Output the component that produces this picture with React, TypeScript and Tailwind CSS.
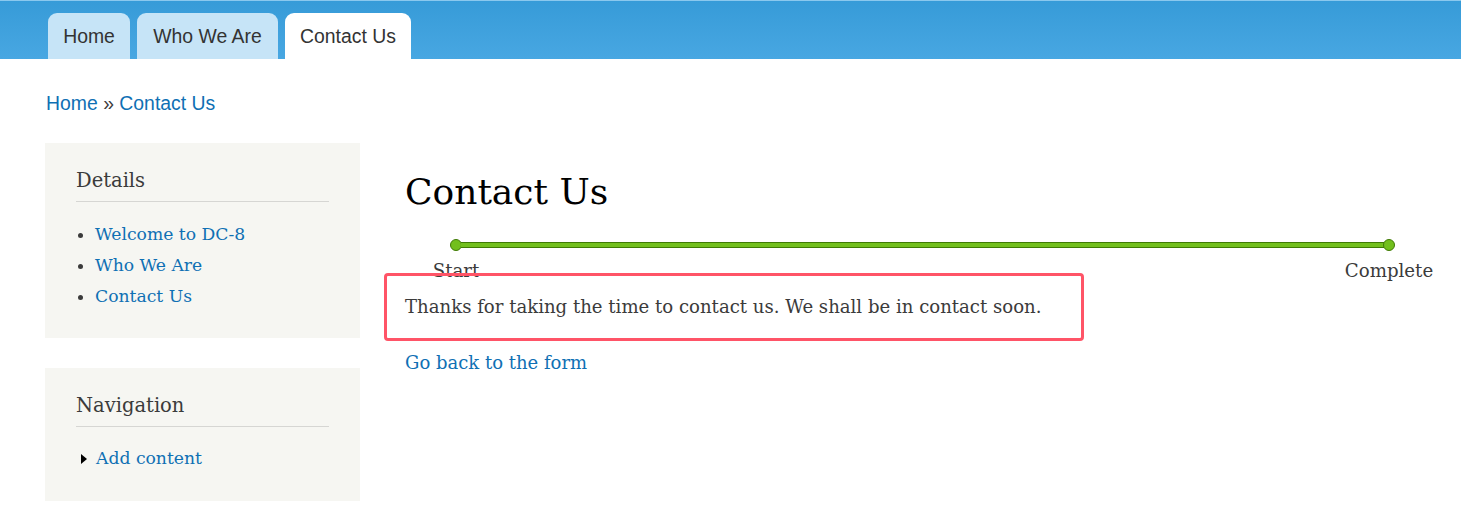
import React from 'react';

const serif = "font-['DejaVu_Serif',serif]";

function Tab({ label, width, active }: { label: string; width: string; active?: boolean }) {
  return (
    <a
      href="#"
      className={
        (active ? "bg-white " : "bg-[#c6e4f7] ") +
        width +
        " h-[46px] pt-[12px] text-center rounded-t-[9px] text-[19.4px] leading-[22px] text-[#333]"
      }
    >
      {label}
    </a>
  );
}

function Block({ title, children, className }: { title: string; children: React.ReactNode; className?: string }) {
  return (
    <div className={"bg-[#f6f6f2] px-[31px] pt-[25px] " + (className ?? "")}>
      <h2 className="text-[19.5px] leading-[26px] text-[#3b3b3b] pb-[7px] border-b border-[#d6d6d3]">{title}</h2>
      {children}
    </div>
  );
}

export default function App() {
  return (
    <main className="min-h-screen bg-white">
      <header className="h-[59px] border-t border-[#8ac8ee] bg-gradient-to-b from-[#369bd8] to-[#48a7e2] flex items-end gap-[7px] pl-[48px] font-['Liberation_Sans',Arial,sans-serif]">
        <Tab label="Home" width="w-[82px]" />
        <Tab label="Who We Are" width="w-[141px]" />
        <Tab label="Contact Us" width="w-[126px]" active />
      </header>

      <nav className="pl-[46px] pt-[32px] text-[19.4px] leading-[24px] font-['Liberation_Sans',Arial,sans-serif] text-[#0f70b4]">
        <a href="#">Home</a> <span className="text-[#3b3b3b]">»</span> <a href="#">Contact Us</a>
      </nav>

      <div className={"flex pl-[45px] pt-[28px] " + serif}>
        <aside className="w-[315px] flex flex-col gap-[30px]">
          <Block title="Details" className="h-[195px]">
            <ul className="mt-[17px] pl-[19px] list-disc text-[17.2px] leading-[31px] marker:text-[#3b3b3b]">
              <li><a href="#" className="text-[#0f70b4]">Welcome to DC-8</a></li>
              <li><a href="#" className="text-[#0f70b4]">Who We Are</a></li>
              <li><a href="#" className="text-[#0f70b4]">Contact Us</a></li>
            </ul>
          </Block>
          <Block title="Navigation" className="h-[133px]">
            <ul className="mt-[16px] text-[17.2px] leading-[31px]">
              <li className="flex items-center gap-[9px]">
                <svg width="6" height="10" viewBox="0 0 6 10" className="ml-[5px]"><path d="M0 0 L6 5 L0 10 Z" fill="#000" /></svg>
                <a href="#" className="text-[#0f70b4]">Add content</a>
              </li>
            </ul>
          </Block>
        </aside>

        <section className="flex-1 pl-[45px] pr-[21px]">
          <h1 className="text-[36px] leading-[48px] text-black mt-[25px]">Contact Us</h1>
          <div className="mt-[23px] flex items-center px-[45px]">
            <span className="w-[12px] h-[12px] rounded-full bg-[#72bf1d] border border-[#3f7a05]" />
            <span className="flex-1 h-[6px] -mx-[1px] bg-[#72bf1d] border-y border-[#3f7a05]" />
            <span className="w-[12px] h-[12px] rounded-full bg-[#72bf1d] border border-[#3f7a05]" />
          </div>
          <div className="flex justify-between text-[18.2px] leading-[20px] text-[#3b3b3b] mt-[10px]">
            <span className="w-[102px] text-center">Start</span>
            <span className="w-[102px] text-center">Complete</span>
          </div>
          <div className="relative mt-[14px] text-[18.1px] leading-[24px] text-[#3b3b3b]">
            <p>Thanks for taking the time to contact us. We shall be in contact soon.</p>
            <div className="absolute -left-[21px] -top-[22px] w-[700px] h-[68px] border-[3px] border-[#ff5467] rounded-[4px]" />
          </div>
          <a href="#" className="block mt-[32px] text-[18px] leading-[24px] text-[#0f70b4]">Go back to the form</a>
        </section>
      </div>
    </main>
  );
}
